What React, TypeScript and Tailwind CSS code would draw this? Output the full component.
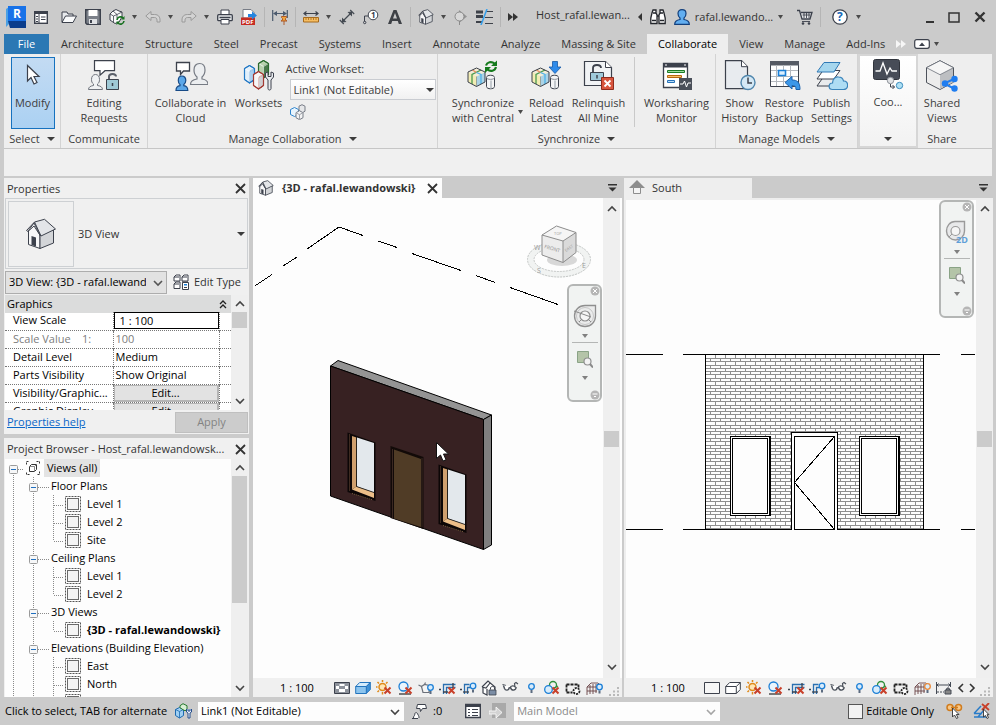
import { useState, type ReactNode } from "react";
import clsx from "clsx";

const INK = "#3c414c";
const BLUE = "#1b7fd6";

function Icon({ size = 16, w, children }: { size?: number; w?: number; children: ReactNode }) {
  return (
    <svg width={w ?? size} height={size} viewBox={`0 0 ${w ?? size} ${size}`} fill="none" className="shrink-0" aria-hidden="true">
      {children}
    </svg>
  );
}

function Caret({ small }: { small?: boolean }) {
  return small ? (
    <Icon size={6} w={5}>
      <path d="M0 1h5L2.500 5z" fill="#4a4a4a" />
    </Icon>
  ) : (
    <Icon size={6} w={8}>
      <path d="M0 1h8L4 5z" fill="#3c3c3c" />
    </Icon>
  );
}

function Chevron({ dir = "down", color = "#444" }: { dir?: "up" | "down"; color?: string }) {
  return (
    <Icon size={8} w={10}>
      <path d={dir === "up" ? "M1 6l4-4 4 4" : "M1 2l4 4 4-4"} stroke={color} strokeWidth="1.6" />
    </Icon>
  );
}

function CloseX() {
  return (
    <Icon size={11}>
      <path d="M1 1l9 9M10 1l-9 9" stroke="#333" strokeWidth="1.8" />
    </Icon>
  );
}

/* ---------- shared icon parts ---------- */

function RedX({ x, y, s = 6 }: { x: number; y: number; s?: number }) {
  return <path d={`M${x} ${y}l${s} ${s}M${x + s} ${y}l${-s} ${s}`} stroke="#c8402a" strokeWidth="2" />;
}

function Bulb({ x, y, color = BLUE }: { x: number; y: number; color?: string }) {
  return (
    <g>
      <circle cx={x} cy={y} r="2.8" fill="#d7ebfb" stroke={color} strokeWidth="1.3" />
      <path d={`M${x - 1} ${y + 3.5}h2v3h-2z`} fill="#5b6b80" />
    </g>
  );
}

function HexBlock({ x, y, color, light, mid }: { x: number; y: number; color: string; light: string; mid: string }) {
  return (
    <g transform={`translate(${x} ${y})`} stroke={color} strokeLinejoin="round">
      <path d="M5.500.5l5 3v11l-5 3.500-5-3.500v-11z" fill={light} />
      <path d="M5.500 6.500l5-3v11l-5 3.500z" fill={mid} />
      <path d="M.5 3.500l5 3 5-3M5.500 6.500V18" strokeWidth=".7" stroke="#fff" />
      <path d="M5.500.5l5 3v11l-5 3.500-5-3.500v-11z" strokeWidth="1.200" />
    </g>
  );
}

function CentralModel() {
  return (
    <g>
      <path d="M9.500 8l8.500 4v10l-8.500 4.500L1 22V12z" fill="#f2ecb4" />
      <path d="M9.500 16.500L18 12v10l-8.500 4.500z" fill="#abd3e6" />
      <path d="M9.500 8l8.500 4-8.500 4.500L1 12z" fill="#f3ecd8" />
      <path d="M14 10l-9 4.500v9.500" stroke="#4a9a4f" strokeWidth="1.300" />
      <path d="M5.500 10l4 2.500" stroke="#e88a5c" strokeWidth="1.300" />
      <path d="M9.500 12.500l4.500 2v9.500" stroke="#4fb2e8" strokeWidth="1.300" />
      <path d="M9.500 16.500v10" stroke="#8f948f" strokeWidth=".8" />
      <path d="M9.500 8l8.500 4v10l-8.500 4.500L1 22V12z" stroke={INK} strokeLinejoin="round" />
      <path d="M19.500 17.500c0-3 8-3 8 0v9c0 3-8 3-8 0z" fill="#f4f5f6" stroke={INK} />
      <path d="M19.500 17.500c0 2.500 8 2.500 8 0" stroke="#8a8f98" />
      <path d="M24 20.500v8" stroke="#b5bac0" strokeWidth="1.500" />
    </g>
  );
}

function House({ size = 16 }: { size?: number }) {
  const line = size > 20 ? 1 : 1.6;
  return (
    <svg width={size} height={size} viewBox="0 0 32 32" fill="none" className="shrink-0" aria-hidden="true">
      <path d="M3.500 12.500v14L15 30.500V17L9 5z" fill="#f7f7f8" stroke={INK} strokeWidth={line} />
      <path d="M15 17v13.500L28.500 25V11z" fill="#d3d5d8" stroke={INK} strokeWidth={line} />
      <path d="M9.500 4l10-2.700L30.500 11 16 18z" fill="#e3e5e8" stroke={INK} strokeWidth={line} strokeLinejoin="round" />
      <path d="M9.500 4L1.500 12.500l1.500 1 6-5.500 6.500 10" stroke={INK} strokeWidth={line} strokeLinejoin="round" fill="none" />
      <path d="M6.500 18l4.500 1.500v9l-4.500-1.500z" fill={INK} />
    </svg>
  );
}

/* ---------- quick access toolbar ---------- */

function RevitLogo() {
  return (
    <Icon size={22} w={20}>
      <path d="M0 3l3-2v17l-3 3z" fill="#4ba0e4" />
      <path d="M2 15h18v7H4z" fill="#0a3d8c" />
      <path d="M2 0h18v15H2z" fill="#1872e8" />
      <text x="7" y="12" fontSize="12" fontWeight="700" fill="#fff">R</text>
    </Icon>
  );
}

const qat: Record<string, ReactNode> = {
  Home: (
    <Icon w={14}>
      <rect x=".7" y="2.700" width="12.600" height="11.600" fill="#fff" stroke={INK} strokeWidth="1.400" />
      <path d="M0 2h14v3H0z" fill={INK} />
      <path d="M5 5v9M2 7.500h2M2 10h2M2 12.500h2M7 8h4.500M7 10.500h4.500" stroke={INK} />
    </Icon>
  ),
  Open: (
    <Icon>
      <path d="M1 13V3h5l1 2h5v2" fill="#e8eaed" stroke={INK} />
      <path d="M1 13.500L4.500 7H15.500L12 13.500z" fill="#fafbfc" stroke={INK} strokeLinejoin="round" />
    </Icon>
  ),
  Save: (
    <Icon>
      <path d="M.7.7h14.600v14.600H2L.7 14z" fill="#7b8089" stroke={INK} strokeWidth="1.400" />
      <path d="M3.500 1h9v6h-9z" fill="#fff" />
      <path d="M4 10h8v5H4z" fill="#dfe1e4" />
      <path d="M5 11h2v3H5z" fill={INK} />
    </Icon>
  ),
  Synchronize: (
    <Icon>
      <path d="M4 2l3-1.500 3 1.500 3 1v5l-3 5-4 1.500L1 11V5z" fill="#fafafa" stroke={INK} />
      <path d="M1 5l3.500 2L8 5.500 13 3M4.500 7v6M4 2l4 3.500v4" stroke={INK} strokeWidth=".8" />
      <path d="M8 11a3.500 3.500 0 0 1 6-2M15 12a3.500 3.500 0 0 1-6 2" stroke="#17701f" strokeWidth="1.600" />
      <path d="M15.500 7v3.500H12zM7.500 16v-3.500H11z" fill="#17701f" />
    </Icon>
  ),
  Undo: (
    <Icon>
      <path d="M6 2.500v3h3.500c4 0 5.500 2.500 5.500 5.500v2h-3v-2c0-1.500-1-2.500-2.500-2.500H6v3L.8 7z" fill="#d3d3d3" stroke="#9a9a9a" strokeLinejoin="round" />
    </Icon>
  ),
  Redo: (
    <Icon>
      <path d="M10 2.500v3H6.500C2.500 5.500 1 8 1 11v2h3v-2c0-1.500 1-2.500 2.500-2.500H10v3L15.200 7z" fill="#d3d3d3" stroke="#9a9a9a" strokeLinejoin="round" />
    </Icon>
  ),
  Print: (
    <Icon>
      <path d="M4 1h8v5H4z" fill="#fff" stroke={INK} />
      <rect x=".7" y="5.700" width="14.600" height="6" rx="1" fill="#e4e6e8" stroke={INK} strokeWidth="1.300" />
      <path d="M2.500 8.500h11" stroke={INK} strokeWidth="1.500" />
      <path d="M4 10.500h8v4.500H4z" fill="#fff" stroke={INK} />
    </Icon>
  ),
  "Export PDF": (
    <Icon>
      <path d="M2 .5h8l3 3V9H2z" fill="#fff" stroke="#777c86" />
      <path d="M0 8.500h14V16H0z" fill="#c62d23" />
      <path d="M7 5h4V2.500l5 4-5 4V8H7z" fill="#2585df" />
      <text x="1" y="15" fontSize="6" fontWeight="700" fill="#fff">PDF</text>
    </Icon>
  ),
  Dimension: (
    <Icon>
      <path d="M.7 1v11M15.300 1v8M2 4.500h12" stroke="#4b5a6e" strokeWidth="1.200" />
      <path d="M1 4.500L5 2v5zM15 4.500L11 2v5z" fill="#4b5a6e" />
      <path d="M9.500 7.500h5v1l-1 1v1.500l1.500 1H9l1.500-1V9.500l-1-1zM12 12v4" fill="#f2a53e" stroke="#a9511d" strokeWidth=".9" />
    </Icon>
  ),
  Measure: (
    <Icon>
      <path d="M2 4.500h12M3.500 2.500l-2.500 2 2.500 2M12.500 2.500l2.500 2-2.500 2" stroke={INK} strokeWidth="1.200" />
      <path d="M.5 8.500h15v4.500H.5z" fill="#f6bd62" stroke="#a66a1d" />
      <path d="M3 9v2M5.500 9v2M8 9v2M10.500 9v2M13 9v2" stroke="#a66a1d" strokeWidth=".8" />
    </Icon>
  ),
  Aligned: (
    <Icon>
      <path d="M3.500 12.500l9-9" stroke="#444a52" strokeWidth="1.300" />
      <path d="M3 8.500l4.500 4.500L3 13.500zM13 7.500L8.500 3l4.500-.5z" fill="#444a52" />
      <path d="M.8 11l4 4M11.200 1l4 4" stroke="#444a52" strokeWidth="1.200" />
    </Icon>
  ),
  Tag: (
    <Icon>
      <circle cx="10" cy="6" r="4.800" fill="#fff" stroke={INK} />
      <text x="8" y="9" fontSize="8" fontWeight="700" fill={INK}>1</text>
      <path d="M5 7H1.500v6" stroke={INK} />
      <circle cx="1.700" cy="13.500" r="1.200" fill="#cbcbcb" stroke={INK} />
    </Icon>
  ),
  Text: (
    <Icon>
      <path d="M1 15L6.500 1h3L15 15h-3.200l-1-3H5.200l-1 3zM6 9.500h4L8 4z" fill="#3e4146" />
    </Icon>
  ),
  "3D View": <House />,
  Section: (
    <Icon w={14}>
      <path d="M5 1l8 6.500L5 14" fill="#949494" />
      <circle cx="5.500" cy="7.500" r="4.500" fill="#d8d8d8" stroke="#8b8b8b" />
      <path d="M5.500 12v4" stroke="#8b8b8b" />
    </Icon>
  ),
  "Thin Lines": (
    <Icon w={17}>
      <path d="M0 3h7M0 7.500h7" stroke="#3e424a" strokeWidth="3" />
      <path d="M0 13h6" stroke="#3e424a" strokeWidth="2" />
      <path d="M10 2.500h7M9 8.500h8M9 14.500h8" stroke="#3e424a" />
      <path d="M11 0L5 16" stroke="#35a0ee" strokeWidth="1.500" />
    </Icon>
  ),
};

function QatButton({ name, menu }: { name: string; menu?: boolean }) {
  return (
    <div className="flex shrink-0 items-center gap-[7px]">
      <button type="button" aria-label={name}>{qat[name]}</button>
      {menu ? (
        <button type="button" aria-label={`${name} options`}>
          <Caret small />
        </button>
      ) : null}
    </div>
  );
}

function Divider() {
  return <span className="-mx-px h-5 w-px shrink-0 bg-[#b5b5b5]" />;
}

function TitleBar() {
  return (
    <header className="flex h-[34px] shrink-0 items-center gap-2 pr-2 pl-[6px]">
      <RevitLogo />
      <div className="mr-[5px]">
        <QatButton name="Home" />
      </div>
      <QatButton name="Open" />
      <QatButton name="Save" />
      <QatButton name="Synchronize" menu />
      <QatButton name="Undo" menu />
      <QatButton name="Redo" menu />
      <QatButton name="Print" />
      <QatButton name="Export PDF" />
      <Divider />
      <QatButton name="Dimension" />
      <Divider />
      <QatButton name="Measure" menu />
      <QatButton name="Aligned" />
      <QatButton name="Tag" />
      <QatButton name="Text" />
      <Divider />
      <QatButton name="3D View" menu />
      <QatButton name="Section" />
      <QatButton name="Thin Lines" />
      <Divider />
      <button type="button" aria-label="More tools">
        <Icon size={8} w={10}>
          <path d="M0 0l5 4-5 4zM5 0l5 4-5 4z" fill="#333" />
        </Icon>
      </button>
      <span className="ml-[10px] shrink-0 pb-1 whitespace-nowrap">Host_rafal.lewan...</span>
      <Icon size={8} w={4}>
        <path d="M4 0v8L0 4z" fill="#333" />
      </Icon>
      <button type="button" aria-label="Search">
        <Icon>
          <path d="M3 1h3v3l1 2v8.500H.8V9L2 4zM13 1h-3v3L9 6v8.500h6.200V9L14 4z" fill="#fff" stroke="#22252b" strokeWidth="1.300" />
          <path d="M2 11.500h4M10 11.500h4M7 7h2M3 4h3M10 4h3" stroke="#22252b" strokeWidth="1.500" />
        </Icon>
      </button>
      <button type="button" className="flex shrink-0 items-center gap-[5px] whitespace-nowrap">
        <Icon>
          <path d="M.7 15.300c0-3 2-4.300 5.300-4.800V9C4.500 8 4 6.500 4 4.500 4 2 5.500.7 8 .7s4 1.300 4 3.800c0 2-.5 3.500-2 4.500v1.500c3.300.5 5.300 1.800 5.300 4.800z" fill="#62aef0" stroke="#123f7c" strokeWidth="1.200" />
        </Icon>
        rafal.lewando...
        <Caret small />
      </button>
      <button type="button" aria-label="App Store" className="ml-[5px]">
        <Icon w={17}>
          <path d="M1 1.500h2.500L6 10h8l2-6.500H5" stroke={INK} fill="#e9eaec" strokeWidth="1.300" />
          <path d="M6.500 6h8M8 4v5M10.500 4v5M13 4v5M6 12.500h8" stroke={INK} strokeWidth=".9" />
          <circle cx="7" cy="14.500" r="1.300" fill={INK} />
          <circle cx="13" cy="14.500" r="1.300" fill={INK} />
        </Icon>
      </button>
      <Divider />
      <button type="button" aria-label="Help" className="ml-1 flex items-center gap-2">
        <Icon>
          <circle cx="8" cy="8" r="7.200" fill="#fff" stroke={INK} strokeWidth="1.300" />
          <text x="5" y="12" fontSize="12" fontWeight="700" fill="#1668b8">?</text>
        </Icon>
        <Caret small />
      </button>
      <div className="ml-auto flex items-center gap-[14px]">
        <button type="button" aria-label="Minimize">
          <Icon size={12} w={8}>
            <path d="M0 10h8v2H0z" fill="#333" />
          </Icon>
        </button>
        <button type="button" aria-label="Maximize">
          <Icon size={11} w={12}>
            <path d="M1 1h10v9H1z" stroke="#333" strokeWidth="1.500" />
          </Icon>
        </button>
        <button type="button" aria-label="Close" className="mr-[2px]">
          <Icon size={12}>
            <path d="M1.500 1.500l9 9M10.500 1.500l-9 9" stroke="#333" strokeWidth="2.400" />
          </Icon>
        </button>
      </div>
    </header>
  );
}

const tabs = [
  "Architecture", "Structure", "Steel", "Precast", "Systems", "Insert", "Annotate",
  "Analyze", "Massing & Site", "Collaborate", "View", "Manage", "Add-Ins",
];

function RibbonTabs() {
  const [active, setActive] = useState("Collaborate");
  return (
    <nav className="flex h-5 shrink-0 items-stretch gap-px pl-1">
      <button type="button" className="mr-px w-[45px] bg-[#2b78b4] text-white">File</button>
      {tabs.map((tab) => (
        <button
          key={tab}
          type="button"
          onClick={() => setActive(tab)}
          className={clsx("whitespace-nowrap", tab === active ? "bg-[#eeeeee] px-[11px] text-black" : "px-[10px] text-[#333]")}
        >
          {tab}
        </button>
      ))}
      <div className="flex items-center gap-2">
        <Icon size={8} w={10}>
          <path d="M0 0l5 4-5 4zM5 0l5 4-5 4z" fill="#f6f6f6" />
        </Icon>
        <button type="button" aria-label="Minimize ribbon" className="flex items-center gap-1">
          <Icon size={10} w={16}>
            <rect x=".7" y=".7" width="14.600" height="8.600" rx="2" fill="#fff" stroke={INK} strokeWidth="1.200" />
            <path d="M5 7l3-3.500L11 7z" fill={INK} />
          </Icon>
          <Caret small />
        </button>
      </div>
    </nav>
  );
}

/* ---------- large ribbon icons ---------- */

const big: Record<string, ReactNode> = {
  modify: (
    <Icon size={32} w={20}>
      <path d="M4.500 5.500v15.500l3.500-3.500 3 6.500 3-1.500-3-6h5z" fill="#fff" stroke={INK} strokeWidth="1.200" />
    </Icon>
  ),
  editing: (
    <Icon size={32}>
      <path d="M6.500.7h20v10H17l-5 4.500v-4.500H6.500z" fill="#fff" stroke={INK} strokeWidth="1.200" />
      <path d="M.5 29.500c0-2.500 2-3.500 5-4V24c-1.500-1-2-2.500-2-4.500 0-3 1.500-5 4-5s4 2 4 5c0 2-.5 3.500-2 4.500v1.500c3 .5 5 1.500 5 4z" fill="#f0f2f4" stroke="#70757e" />
      <path d="M21 20v-3.500c0-3.500 7-3.500 7 0" stroke="#5b606a" strokeWidth="2" />
      <path d="M18.500 19.500h12v10h-12z" fill="#9fc9d6" stroke={INK} />
      <path d="M24.500 23v3" stroke={INK} strokeWidth="1.500" />
    </Icon>
  ),
  cloud: (
    <Icon size={32} w={34}>
      <path d="M2.500 2.500h13v8.500H9.500L6.500 14.500V11h-4z" fill="#fff" stroke={INK} strokeWidth="1.300" />
      <path d="M16.500 24.500c0-3.500 3-5 6.500-5.500v-2c-2-1.500-3-4-3-7 0-4 2-6.500 5.500-6.500S31 6 31 10c0 3-1 5.500-3 7v2c3.500.5 6 2 6 5.500z" fill="#eceef0" stroke="#767b84" strokeWidth="1.200" />
      <path d="M2 30.500c0-3 2-4.500 4-4.800v-1.200c-1.200-1-1.700-2.500-1.700-4C4.300 18 5.300 16 7.800 16s4 2 4 4.500c0 1.500-.7 3-2 4v1.200c2 .3 4 1.800 4 4.800z" fill="#5ba7e8" stroke="#174a86" strokeWidth="1.200" />
    </Icon>
  ),
  worksets: (
    <Icon size={32}>
      <HexBlock x={1} y={5} color="#2479c5" light="#e2f0fb" mid="#a9d0f0" />
      <HexBlock x={15} y={0} color="#2c6b2f" light="#b9d2ae" mid="#4b7a4b" />
      <HexBlock x={10} y={11} color="#a33a33" light="#f6f6f6" mid="#cfcfd2" />
      <path d="M22.500 13v4l2.500 3v8.500c0 2 3 2 3 0V20l2.500-3v-4l-2.500-1v4.500h-3V12z" fill="#e9ebee" stroke={INK} />
    </Icon>
  ),
  sync: (
    <Icon size={32}>
      <CentralModel />
      <path d="M19 5.500C20 2 24.500 1 27.500 3.500M29 7c-1 4-5.500 5-8.500 2.500" stroke="#157a1c" strokeWidth="2.200" />
      <path d="M30 .5V6h-6zM18 13V7h6z" fill="#157a1c" />
    </Icon>
  ),
  reload: (
    <Icon size={32}>
      <CentralModel />
      <path d="M21.500 1.500h5V7h3.500l-6 6.500L18 7h3.500z" fill="#2f8bea" stroke="#1659a6" strokeWidth=".8" />
    </Icon>
  ),
  relinquish: (
    <Icon size={32}>
      <path d="M1.500 1.500h21l6 6v18h-27z" fill="#f1f3f5" stroke={INK} strokeWidth="1.200" />
      <path d="M22.500 1.500v6h6" fill="#fff" stroke={INK} />
      <path d="M10 12V8c0-4 8-4 8 0" stroke={INK} strokeWidth="1.800" />
      <path d="M7.500 12.500h13v8h-13z" fill="#9fcadb" stroke={INK} />
      <path d="M14 15v3.500" stroke={INK} strokeWidth="1.500" />
      <path d="M18.500 17.500h12v12h-12z" fill="#d8553d" stroke="#8f2b1c" />
      <path d="M21.500 20.500l6 6M27.500 20.500l-6 6" stroke="#fff" strokeWidth="1.800" />
    </Icon>
  ),
  monitor: (
    <Icon size={32}>
      <path d="M2.500 3.500h24v24h-24z" fill="#fff" stroke={INK} strokeWidth="1.300" />
      <path d="M2 3h25v4.500H2z" fill={INK} />
      <path d="M23 5h2M4 5h2" stroke="#fff" />
      <path d="M6.500 10.500h17v2h-17z" fill="#9edc9e" stroke="#1b7a26" />
      <path d="M6.500 15.500h14v2h-14z" fill="#f7c068" stroke="#b8660f" />
      <path d="M6.500 20.500h7v2h-7z" fill="#b9dcf6" stroke="#2671b8" />
      <path d="M18 18h13v12H18z" fill="#4a4f59" />
      <path d="M19 24h3l1.500-3 2 6 1.500-4h3" stroke="#fff" />
    </Icon>
  ),
  history: (
    <Icon size={32}>
      <path d="M1.500.7h16l6 6v22h-22z" fill="#e8ebef" stroke={INK} strokeWidth="1.200" />
      <path d="M17.500.7v6h6" fill="#fff" stroke={INK} />
      <circle cx="24" cy="22.500" r="7" fill="#d4e8f5" stroke="#4f86ad" strokeWidth="1.400" />
      <path d="M24 17.500v5.500h4" stroke={INK} strokeWidth="1.500" />
    </Icon>
  ),
  restore: (
    <Icon size={32}>
      <path d="M1.500 2.500h28v24h-28z" fill="#fff" stroke={INK} />
      <path d="M1 1h29v4.500H1z" fill="#555a64" />
      <path d="M7.500 5v21M14.500 5v21M21.500 5v21M2 10.500h27M2 16.500h27M2 21.500h27" stroke="#b4b8be" />
      <path d="M9.500 10.500h7v5h-7z" fill="#dcefff" stroke={BLUE} strokeWidth="1.600" />
      <path d="M16 22.500l7-6V20c5 0 8 2 8 9.500h-4c0-3-1-4-4-4V29z" fill="#3c97e8" stroke="#1b62ae" />
    </Icon>
  ),
  publish: (
    <Icon size={32}>
      <path d="M7 17.500h17l-6 8.500H1z" fill="#e9ebed" stroke={INK} />
      <path d="M7 10.500h17l-6 8.500H1z" fill="#fff" stroke={INK} />
      <path d="M8 2.500h16l-6 9.500H1z" fill="#a5d6ee" stroke="#3079b5" />
      <path d="M16.500 29.500c-4.500 0-4.500-6.500 0-6.500 0-4 3-6.500 6-6 2.500 0 4.500 1.500 5 4 5.500-.5 5.500 8.500 0 8.500z" fill="#aeddf4" stroke="#3a84bb" strokeWidth="1.200" />
    </Icon>
  ),
  coordination: (
    <Icon size={32}>
      <rect x="1.500" y=".5" width="26" height="20" rx="2" fill="#474c57" stroke="#30343c" />
      <path d="M3.500 12h4.500l3-8 4 11 3-6 2 3h5" stroke="#fff" strokeWidth="1.300" />
      <circle cx="18.500" cy="21.500" r="3.200" fill="#e1e3e6" stroke="#8b9097" />
      <circle cx="27.500" cy="26.500" r="3.200" fill="#aee0f4" stroke="#3d8cbd" />
      <path d="M18.500 25v3h4M20.500 26l2 2-2 2" stroke={INK} />
    </Icon>
  ),
  shared: (
    <Icon size={32} w={34}>
      <path d="M15 .7l13.500 7v14.500L15 29.500 1.500 22.500V7.700z" fill="#ececec" stroke="#4d525b" />
      <path d="M15 14.700l13-7v14.500L15 29z" fill="#bdbfc2" />
      <path d="M15 .7l13.500 7L15 14.700 1.500 7.700z" fill="#f6f6f6" stroke="#6a6f78" strokeWidth=".8" />
      <path d="M29 19l-10 4.500L29 28.500" stroke="#1f7df0" strokeWidth="2" />
      <circle cx="29.500" cy="19" r="3.200" fill="#1f7df0" />
      <circle cx="20" cy="23.500" r="3.200" fill="#1f7df0" />
      <circle cx="29.500" cy="28.500" r="3.200" fill="#1f7df0" />
    </Icon>
  ),
};

function RibbonButton({ icon, lines, className }: { icon: string; lines: string[]; className?: string }) {
  return (
    <button type="button" className={clsx("flex shrink-0 flex-col items-center pt-[3px] leading-[15px] whitespace-nowrap", className)}>
      {big[icon]}
      <span className="mt-[3px] flex flex-col">
        {lines.map((line) => (
          <span key={line}>{line}</span>
        ))}
      </span>
    </button>
  );
}

function RibbonGroup({ label, menu, className, children }: { label: string; menu?: boolean; className: string; children: ReactNode }) {
  return (
    <section className={clsx("flex shrink-0 flex-col border-r border-[#d3d3d3]", className)}>
      <div className="flex h-[75px] items-start justify-center pt-[3px]">{children}</div>
      <div className="flex flex-1 items-center justify-center gap-[7px] whitespace-nowrap">
        {label}
        {menu ? <Caret /> : null}
      </div>
    </section>
  );
}

function Ribbon() {
  return (
    <div className="mx-1 shrink-0 bg-[#eeeeee] text-[#3c3c3c]">
      <div className="flex h-[95px] border-b border-[#c6c6c6]">
        <RibbonGroup label="Select" menu className="w-[57px]">
          <button type="button" className="ml-px flex h-[72px] w-11 flex-col items-center border border-[#1672bf] bg-gradient-to-b from-[#c3dbf3] to-[#abd1f2] pt-[2px] leading-[15px]">
            {big.modify}
            <span className="mt-[3px]">Modify</span>
          </button>
        </RibbonGroup>
        <RibbonGroup label="Communicate" className="w-[87px]">
          <RibbonButton icon="editing" lines={["Editing", "Requests"]} />
        </RibbonGroup>
        <RibbonGroup label="Manage Collaboration" menu className="w-[290px]">
          <RibbonButton icon="cloud" lines={["Collaborate in", "Cloud"]} className="w-[82px]" />
          <RibbonButton icon="worksets" lines={["Worksets"]} className="w-[54px]" />
          <div className="flex flex-col pt-1">
            <label htmlFor="active-workset" className="leading-4">Active Workset:</label>
            <div className="relative mt-[2px] ml-1">
              <select id="active-workset" className="h-[21px] w-[146px] appearance-none border border-[#c9ccd1] bg-gradient-to-b from-white to-[#f1f1f1] pl-[3px]">
                <option>Link1 (Not Editable)</option>
              </select>
              <span className="pointer-events-none absolute top-2 right-[2px]"><Caret /></span>
            </div>
            <button type="button" aria-label="Gray inactive worksets" className="mt-1 ml-1 w-4">
              <Icon>
                <path d="M4.500 3.500l4 2v5l-4 2-4-2v-5z" fill="#e8f4fd" stroke="#2f86cf" />
                <path d="M12 .7l3 1.500v5L12 9 9 7V2.200z" fill="#e6e7e9" stroke="#777c86" />
                <path d="M9.500 6.700l3.500 2v5l-3.500 2-3.500-2v-5z" fill="#f3f3f4" stroke="#777c86" />
                <path d="M6 8.700l3.500 2 3.500-2M9.500 10.500v5" stroke="#a0a4ab" />
              </Icon>
            </button>
          </div>
        </RibbonGroup>
        <RibbonGroup label="Synchronize" menu className="w-[278px]">
          <RibbonButton icon="sync" lines={["Synchronize", "with Central"]} className="ml-[10px] w-[69px]" />
          <button type="button" aria-label="Synchronize options" className="mt-[52px] w-[6px]"><Caret small /></button>
          <RibbonButton icon="reload" lines={["Reload", "Latest"]} className="ml-[2px] w-[42px]" />
          <RibbonButton icon="relinquish" lines={["Relinquish", "All Mine"]} className="w-[62px]" />
          <span className="mx-1 h-[70px] w-px bg-[#c9c9c9]" />
          <RibbonButton icon="monitor" lines={["Worksharing", "Monitor"]} className="w-[76px]" />
        </RibbonGroup>
        <RibbonGroup label="Manage Models" menu className="w-[142px]">
          <RibbonButton icon="history" lines={["Show", "History"]} className="w-[44px]" />
          <RibbonButton icon="restore" lines={["Restore", "Backup"]} className="w-[46px]" />
          <RibbonButton icon="publish" lines={["Publish", "Settings"]} className="w-[48px]" />
        </RibbonGroup>
        <section className="flex w-[60px] shrink-0 flex-col items-center border-2 border-[#d6d6d6] bg-gradient-to-b from-white to-[#f2f2f2]">
          <RibbonButton icon="coordination" lines={["Coo..."]} className="pt-1" />
          <span className="mt-auto mb-1"><Caret /></span>
        </section>
        <section className="flex w-[48px] shrink-0 flex-col">
          <div className="flex h-[75px] justify-center pt-[3px]">
            <RibbonButton icon="shared" lines={["Shared", "Views"]} />
          </div>
          <div className="flex flex-1 items-center justify-center">Share</div>
        </section>
      </div>
      <div className="h-[27px] bg-[#f0f0f0]" />
    </div>
  );
}

/* ---------- properties palette ---------- */

const properties = [
  { name: "View Scale", value: "1 : 100", kind: "input" },
  { name: "Scale Value    1:", value: "100", kind: "muted" },
  { name: "Detail Level", value: "Medium", kind: "text" },
  { name: "Parts Visibility", value: "Show Original", kind: "text" },
  { name: "Visibility/Graphic...", value: "Edit...", kind: "button" },
  { name: "Graphic Display ...", value: "Edit...", kind: "button" },
];

function ScrollBar({ thumb, className = "py-[5px]" }: { thumb: string; className?: string }) {
  return (
    <div className={clsx("flex w-[17px] shrink-0 flex-col items-center bg-[#efefef]", className)}>
      <Chevron dir="up" />
      <div className={clsx("w-[15px] bg-[#cbcbcb]", thumb)} />
      <span className="mt-auto"><Chevron /></span>
    </div>
  );
}

function PropertiesPalette() {
  return (
    <section className="flex shrink-0 flex-col bg-[#f0f0f0] px-px">
      <div className="flex h-5 items-center justify-between pt-px pr-[2px] pl-[2px] text-[#333]">
        Properties
        <button type="button" aria-label="Close properties"><CloseX /></button>
      </div>
      <div className="flex h-[71px] items-center border border-[#cdd0d3] p-[2px]">
        <div className="grid h-[66px] w-[66px] place-items-center border border-[#cdd0d3]">
          <House size={32} />
        </div>
        <span className="ml-1 text-[#333]">3D View</span>
        <button type="button" aria-label="Change type" className="ml-auto"><Caret /></button>
      </div>
      <div className="flex h-[26px] items-center">
        <div className="relative">
          <select aria-label="View" className="h-[23px] w-[162px] appearance-none border border-[#adadad] bg-[#e2e2e2] pr-5 pl-[3px] text-black">
            <option>{"3D View: {3D - rafal.lewandowski}"}</option>
          </select>
          <span className="pointer-events-none absolute top-2 right-1"><Chevron color="#555" /></span>
        </div>
        <button type="button" className="ml-[6px] flex items-center gap-[5px] whitespace-nowrap">
          <Icon>
            <path d="M1 3l2-2h4v6H1zM9 3l2-2h4v6M9 3v4h6M1 10l2-2h4v6.500H1zM9 8h6" fill="#fff" stroke={INK} />
            <path d="M1 3h5M9 3h5M1 10h5" stroke={INK} />
            <path d="M9.500 8.500h6v7h-6z" fill="#fff" stroke={INK} />
            <path d="M11 10h3v1.500h-3z" fill={BLUE} />
            <path d="M11 13.500h3" stroke={INK} />
          </Icon>
          Edit Type
        </button>
      </div>
      <div className="flex h-[115px] overflow-hidden">
        <div className="flex-1 overflow-hidden bg-white">
          <div className="flex h-[18px] items-center justify-between bg-[#dbdcdc] pr-1 pl-[2px] text-black">
            Graphics
            <button type="button" aria-label="Collapse group">
              <Icon size={9} w={8}>
                <path d="M1 4l3-3 3 3M1 8l3-3 3 3" stroke="#222" strokeWidth="1.300" />
              </Icon>
            </button>
          </div>
          <table className="-mt-px w-full table-fixed border-collapse text-black">
            <colgroup>
              <col />
              <col className="w-[106px]" />
              <col className="w-3" />
            </colgroup>
            <tbody>
              {properties.map((row) => (
                <tr key={row.name} className="h-[18px] border-b border-dotted border-[#777]">
                  <th
                    scope="row"
                    className={clsx(
                      "overflow-hidden p-0 pb-px pl-2 text-left leading-4 font-normal whitespace-pre",
                      row.kind === "muted" && "text-[#7d7d7d]",
                    )}
                  >
                    {row.name}
                  </th>
                  <td className={clsx("border-x border-dotted border-[#777] p-0 leading-4", row.kind === "muted" && "text-[#7d7d7d]")}>
                    {row.kind === "input" ? (
                      <input aria-label={row.name} defaultValue={row.value} className="block h-[17px] w-full border border-black bg-white pl-[5px] outline-none" />
                    ) : row.kind === "button" ? (
                      <button type="button" className="block h-[17px] w-full border border-r-2 border-b-2 border-[#b5b5b5] bg-[#e2e2e2] leading-[14px]">
                        {row.value}
                      </button>
                    ) : (
                      <span className="block pb-px pl-[2px]">{row.value}</span>
                    )}
                  </td>
                  <td />
                </tr>
              ))}
            </tbody>
          </table>
        </div>
        <ScrollBar thumb="mt-1 h-4" />
      </div>
      <div className="flex h-6 items-center justify-between pl-[2px]">
        <a href="#help" className="text-[#0a66c8] underline">Properties help</a>
        <button type="button" disabled className="h-[21px] w-[73px] border border-[#bfbfbf] bg-[#cccccc] text-[#838383]">Apply</button>
      </div>
    </section>
  );
}

/* ---------- project browser ---------- */

type TreeRow = { label: string; level: 0 | 1 | 2; last?: boolean; bold?: boolean };

const tree: TreeRow[] = [
  { label: "Views (all)", level: 0 },
  { label: "Floor Plans", level: 1 },
  { label: "Level 1", level: 2 },
  { label: "Level 2", level: 2 },
  { label: "Site", level: 2, last: true },
  { label: "Ceiling Plans", level: 1 },
  { label: "Level 1", level: 2 },
  { label: "Level 2", level: 2, last: true },
  { label: "3D Views", level: 1 },
  { label: "{3D - rafal.lewandowski}", level: 2, last: true, bold: true },
  { label: "Elevations (Building Elevation)", level: 1 },
  { label: "East", level: 2 },
  { label: "North", level: 2 },
  { label: "South", level: 2 },
];

function TreeCell({ kind, w = 20 }: { kind: "line" | "box" | "rootbox" | "tee" | "end"; w?: number }) {
  const box = kind === "box" || kind === "rootbox";
  return (
    <Icon size={18} w={w}>
      {kind !== "rootbox" ? (
        <path d={kind === "end" ? "M8.500 0v10" : "M8.500 0v18"} stroke="#8a8a8a" strokeDasharray="1 1" />
      ) : (
        <path d="M8.500 14v4" stroke="#8a8a8a" strokeDasharray="1 1" />
      )}
      {kind !== "line" ? <path d={`M9 10.500h${w - 11}`} stroke="#8a8a8a" strokeDasharray="1 1" /> : null}
      {box ? (
        <>
          <rect x="4.500" y="6.500" width="8" height="8" rx="1" fill="#f6f7f8" stroke="#9a9a9a" />
          <path d="M6 10.500h5" stroke="#1f6fc0" />
        </>
      ) : null}
    </Icon>
  );
}

function TreeItem({ row }: { row: TreeRow }) {
  return (
    <li className="flex h-[18px] items-center whitespace-nowrap text-black">
      {row.level === 0 ? (
        <>
          <TreeCell kind="rootbox" />
          <Icon>
            <path d="M1.500 4.500v-3h3M11.500 1.500h3v3M14.500 11.500v3h-3M4.500 14.500h-3v-3" stroke="#333" strokeDasharray="2 1" />
            <path d="M4.500 6.500l2-2h5v5l-2 2h-5z" fill="#fff" stroke="#333" />
            <path d="M4.500 6.500h5v5M9.500 6.500l2-2" stroke="#888" />
          </Icon>
          <span className="ml-[3px] bg-[#e3e3e3] px-[3px] leading-[18px]">{row.label}</span>
        </>
      ) : null}
      {row.level === 1 ? (
        <>
          <TreeCell kind="line" />
          <TreeCell kind="box" w={26} />
          {row.label}
        </>
      ) : null}
      {row.level === 2 ? (
        <>
          <TreeCell kind="line" />
          <TreeCell kind="line" />
          <TreeCell kind={row.last ? "end" : "tee"} />
          <Icon>
            <rect x=".5" y=".5" width="15" height="15" stroke="#555" strokeDasharray="2 1" />
            <rect x="2.500" y="2.500" width="11" height="11" fill="#f4f4f4" stroke="#6a6a6a" />
          </Icon>
          <span className={clsx("ml-[6px]", row.bold && "font-bold")}>{row.label}</span>
        </>
      ) : null}
    </li>
  );
}

function ProjectBrowser() {
  return (
    <section className="mt-1 flex min-h-0 flex-1 flex-col bg-[#f0f0f0] px-px">
      <div className="flex h-[21px] shrink-0 items-center justify-between pt-px pr-[2px] pl-[2px] text-[#333]">
        <h2 className="whitespace-nowrap">Project Browser - Host_rafal.lewandowsk...</h2>
        <button type="button" aria-label="Close project browser"><CloseX /></button>
      </div>
      <div className="flex min-h-0 flex-1 bg-[#fdfdfd]">
        <ul className="h-full min-w-0 flex-1 overflow-hidden">
          {tree.map((row, i) => (
            <TreeItem key={i} row={row} />
          ))}
        </ul>
        <ScrollBar thumb="mt-1 h-[127px]" />
      </div>
    </section>
  );
}

/* ---------- drawing views ---------- */

function ViewCube() {
  return (
    <svg width="66" height="56" viewBox="526 223 66 56" fill="none" aria-label="View cube" role="img">
      <ellipse cx="559" cy="259.500" rx="28.500" ry="15" stroke="#f1f3f2" strokeWidth="6" />
      <ellipse cx="559" cy="259.500" rx="31.500" ry="17.500" stroke="#c3c6c5" strokeDasharray="2 1" />
      <ellipse cx="559" cy="259.500" rx="25" ry="12" stroke="#c3c6c5" strokeDasharray="2 1" />
      <ellipse cx="562" cy="260" rx="15" ry="6" fill="#d8d8d8" />
      <path d="M542 235l21 6v21.500l-21-7.500z" fill="#ececec" />
      <path d="M563 241l13-8.500v20l-13 10z" fill="#dadada" />
      <path d="M542 235l14.500-9 19.500 6.500-13 8.500z" fill="#f5f5f5" />
      <path d="M542 235l14.500-9 19.500 6.500v20l-13 10-21-7.500zM542 235l21 6 13-8.500M563 241v21.500" stroke="#8c8c8c" strokeLinejoin="round" />
      <text x="544" y="248" fontSize="5" fill="#8d8d8d" transform="rotate(16 544 248)">FRONT</text>
      <text x="566" y="252" fontSize="4" fill="#9d9d9d" transform="rotate(-34 566 252)">EAST</text>
      <text x="554" y="235" fontSize="4" fill="#9d9d9d">TOP</text>
      <g fontSize="7" fill="#9a9a9a">
        <text x="534" y="250">W</text>
        <text x="537" y="273">S</text>
        <text x="582" y="268">E</text>
      </g>
    </svg>
  );
}

function NavigationBar({ flat }: { flat?: boolean }) {
  return (
    <div className="flex h-[118px] w-[35px] flex-col items-center rounded-md border-2 border-[#b4b6b5] bg-[#f1f3f2]">
      <button type="button" aria-label="Close navigation bar" className="self-end">
        <Icon size={10}>
          <circle cx="5" cy="5" r="4.500" fill="#b5b5b5" />
          <path d="M3 3l4 4M7 3L3 7" stroke="#fff" />
        </Icon>
      </button>
      <button type="button" aria-label="Steering wheel" className="mt-2">
        <Icon size={24}>
          {flat ? (
            <>
              <path d="M10 1.500h9.500V11c0 5-4 9-9 9s-9-4-9-9 3.500-9.500 8.500-9.500z" fill="#e8e9ea" stroke="#9a9a9a" strokeWidth="1.400" />
              <circle cx="10.500" cy="11" r="4.500" fill="#f6f6f6" stroke="#9a9a9a" strokeWidth="1.200" />
              <path d="M4 17l3-3" stroke="#9a9a9a" />
              <text x="11" y="23" fontSize="9" fontWeight="700" fill="#5f9fd8">2D</text>
            </>
          ) : (
            <>
              <path d="M12 1.500h10.500V12c0 6-4.500 10.500-10.500 10.500S1.500 18 1.500 12 6 1.500 12 1.500z" fill="#ebecec" stroke="#8f8f8f" strokeWidth="1.300" />
              <circle cx="12" cy="12" r="8.500" stroke="#c6c6c6" />
              <circle cx="12" cy="12" r="5" fill="#f6f6f6" stroke="#8f8f8f" strokeWidth="1.200" />
              <path d="M6 18l3-3M18 18l-3-3M1 7l17 6" stroke="#8a8a8a" />
            </>
          )}
        </Icon>
      </button>
      <span className="mt-[6px]"><NavCaret /></span>
      <span className="mt-1 h-px w-[26px] shrink-0 bg-[#b4b6b5]" />
      <button type="button" aria-label="Zoom region" className="mt-2">
        <Icon size={17} w={16}>
          <path d="M.5.5h11v11H.5z" fill="#b4c4a8" stroke="#8aa386" />
          <circle cx="10.500" cy="10.500" r="3.500" fill="#f3f3f3" stroke="#909090" strokeWidth="1.200" />
          <path d="M13 13l3 3.500" stroke="#8a8a8a" strokeWidth="2" />
        </Icon>
      </button>
      <span className="mt-2"><NavCaret /></span>
      <button type="button" aria-label="Navigation bar options" className="mt-auto self-end">
        <Icon size={10}>
          <circle cx="5" cy="5" r="4.500" fill="#b5b5b5" />
          <path d="M2.500 4h5M4 6.500h2" stroke="#fff" />
        </Icon>
      </button>
    </div>
  );
}

function NavCaret() {
  return (
    <svg width="6" height="4" viewBox="0 0 6 4" className="block" aria-hidden="true">
      <path d="M0 0h6L3 4z" fill="#808080" />
    </svg>
  );
}

function Window3D() {
  return (
    <g>
      <path d="M347.500 432.500l28 10v58.500l-28-9z" fill="#0c0606" />
      <path d="M352 436l4.500 1.500v49l-4.500 3z" fill="#cf9f6d" />
      <path d="M352 489.500l4.500-3 17.500 6v5.500z" fill="#ecbe88" />
      <path d="M357 437.500l17 5.500v49.500l-17-6z" fill="#e3e8ec" />
      <path d="M356.500 437v49.500l17.500 6" stroke="#111" strokeWidth=".8" fill="none" />
      <path d="M349.500 434v57" stroke="#4a3528" strokeWidth=".8" />
      <path d="M352 493.500l21 6.500" stroke="#7a6040" strokeDasharray="1 1" />
    </g>
  );
}

function Canvas3D() {
  return (
    <svg className="absolute inset-0 h-full w-full" role="img" aria-label="3D view of the wall">
      <g transform="translate(-253 -198)" strokeLinejoin="round">
        <path
          d="M255.500 285.500l16.500-11M283 266l14-9M307 249l32-22 24 8.500M378 241l19 6.500M412 253.500l49 17M476 275.500l19 7M510 287.500l48 17"
          stroke="#000"
          fill="none"
          shapeRendering="crispEdges"
        />
        <path d="M330.500 366l7.500-5.500 153.500 54.500-8 4.500z" fill="#949494" stroke="#000" />
        <path d="M483.500 419.500l8-4.500V545l-8 4.500z" fill="#7f7f7f" stroke="#000" />
        <path d="M330.500 366l153 53.500v130L330.500 496z" fill="#372122" stroke="#000" />
        <Window3D />
        <g transform="translate(91 32)">
          <Window3D />
        </g>
        <path d="M390.500 446l33 11v72l-33-11z" fill="#120a08" />
        <path d="M392.500 449v69M422 458v69" stroke="#46302a" strokeWidth=".8" />
        <path d="M394 449.500l27 9.500v68l-27-8.500z" fill="#503c26" />
        <path d="M436.500 442.500v16l4-3.500 2.500 6 3-1.200-2.500-5.800h5z" fill="#fff" stroke="#111" />
      </g>
    </svg>
  );
}

function ElevationWindow({ x }: { x: number }) {
  return (
    <g stroke="#000" fill="#fdfdfd">
      <rect x={x + 0.5} y="436.500" width="40" height="79" />
      <path d={`M${x + 40} 437v79`} strokeWidth="2" />
      <rect x={x + 2.5} y="438.500" width="35" height="75" />
    </g>
  );
}

function CanvasSouth() {
  return (
    <svg className="absolute inset-0 h-full w-full" role="img" aria-label="South elevation" shapeRendering="crispEdges">
      <defs>
        <pattern id="brick" x="706" y="355" width="10" height="20" patternUnits="userSpaceOnUse">
          <path
            d="M0 3.500h10M0 6.500h10M0 10.500h10M0 13.500h10M0 16.500h10M0 19.500h10M9.500 0v3M4.500 4v3M9.500 7v3M4.500 11v3M9.500 14v3M4.500 17v3"
            stroke="#8e8e8e"
            fill="none"
          />
        </pattern>
      </defs>
      <g transform="translate(-626 -200)">
        <path d="M705.500 354.500h218v175h-218z" fill="url(#brick)" stroke="#000" />
        <path d="M626 354.500h37M683 354.500h257M961 354.500h14M626 529.500h37M683 529.500h257M961 529.500h14" stroke="#000" />
        <ElevationWindow x={730} />
        <ElevationWindow x={859} />
        <path d="M791.500 529.500v-97h46v97" fill="#fdfdfd" stroke="#000" />
        <path d="M794.500 529.500v-93h40v93z" fill="#fdfdfd" stroke="#000" />
        <path d="M834.500 436.500l-40 46 40 47" fill="none" stroke="#000" />
      </g>
    </svg>
  );
}

/* ---------- view control bar ---------- */

const controls: Record<string, ReactNode> = {
  "Detail level": (
    <Icon>
      <path d="M.5 2.500h15v11H.5z" fill="#8d929b" stroke={INK} />
      <path d="M2 6h3v3H2zM11 6h3v3h-3zM5 9h6v3H5zM5.500 4h5v2h-5z" fill="#fff" />
    </Icon>
  ),
  "Coarse detail": (
    <Icon>
      <path d="M.5 2.500h15v11H.5z" fill="#f6f6f6" stroke={INK} />
    </Icon>
  ),
  "Shaded style": (
    <Icon>
      <path d="M.7 6.500l4-4h10.600l-4 4z" fill="#d5ecfc" stroke="#2374bd" />
      <path d="M11.300 6.500l4-4v7l-4 4z" fill="#3f91d6" stroke="#2374bd" />
      <path d="M.7 6.500h10.600v7H.7z" fill="#8cc4ee" stroke="#2374bd" />
    </Icon>
  ),
  "Hidden line style": (
    <Icon>
      <path d="M.7 6.500l4-4h10.600v7l-4 4H.7z" fill="#fff" stroke={INK} />
      <path d="M.7 6.500h10.600v7M11.300 6.500l4-4" stroke={INK} />
    </Icon>
  ),
  "Sun path": (
    <Icon>
      <circle cx="6.500" cy="7" r="3.500" fill="#ffe6b5" stroke="#e08a1a" strokeWidth="1.500" />
      <path d="M6.500 0v2M6.500 12v2.500M0 7h1.500M1.500 2l1.500 1.500M11.500 2L10 3.500M1.500 12l1.500-1.500" stroke="#e08a1a" strokeWidth="1.500" />
      <RedX x={8.500} y={7.500} />
    </Icon>
  ),
  Shadows: (
    <Icon>
      <path d="M2 14h12" stroke="#777" strokeWidth="2" />
      <circle cx="6.500" cy="6.500" r="4.500" fill="#eaf5fd" stroke={BLUE} strokeWidth="1.300" />
      <RedX x={8.500} y={7.500} />
    </Icon>
  ),
  Rendering: (
    <Icon w={17}>
      <path d="M.5 5l3 1.500L5 12.500h6l.5-7-5-1-3 2M6.500 4.500L7.500 2.500" stroke="#6b707a" strokeWidth="1.200" fill="#f4f4f4" />
      <Bulb x={12.500} y={7.500} />
    </Icon>
  ),
  "Crop view": (
    <Icon w={17}>
      <path d="M0 9.500h2" stroke={INK} strokeWidth="1.500" />
      <path d="M4.500 14V4.500h12M7.500 14V7.500h9" stroke="#2a6fb0" strokeWidth="1.300" />
      <path d="M4 12h5M14 3v5" stroke={INK} strokeWidth="1.300" />
      <RedX x={9.500} y={7.500} />
    </Icon>
  ),
  "Crop region": (
    <Icon w={17}>
      <path d="M0 9.500h2" stroke={INK} strokeWidth="1.500" />
      <path d="M4.500 14V4.500h5M7.500 14V7.500h2.500" stroke="#2a6fb0" strokeWidth="1.300" />
      <path d="M3 12h6" stroke={INK} strokeWidth="1.300" />
      <Bulb x={13} y={6} />
    </Icon>
  ),
  "Locked 3D view": (
    <Icon>
      <path d="M1 7l6-6 7 6v3M2 7v6l4 2v-6M1 7l4 1 4-5" fill="#fff" stroke={INK} strokeWidth="1.200" />
      <path d="M9.500 9.500V8c0-2 4-2 4 0v1.500" stroke={INK} />
      <path d="M8 10h7v5H8z" fill="#7b8da5" stroke={INK} strokeWidth=".8" />
    </Icon>
  ),
  "Temporary hide": (
    <Icon w={17}>
      <path d="M.5 4.500l3.500 1M16 4l-2-1.500-1.500 1 .5 4" stroke="#4a505a" strokeWidth="1.200" />
      <path d="M1.500 5.500l1 3c1 2.500 4.500 2 4.500-.5l1.500-.5c1 4 6 3 5.500-.5" fill="#fff" stroke="#4a505a" strokeWidth="1.400" />
      <path d="M8.500 7.500c0-2 4-2.500 5 0" stroke="#4a505a" strokeWidth="1.200" />
    </Icon>
  ),
  "Reveal hidden": (
    <Icon w={17}>
      <Bulb x={8.500} y={6.500} />
    </Icon>
  ),
  "Temporary properties": (
    <Icon>
      <circle cx="9" cy="5" r="3.500" stroke="#2f8f3c" strokeWidth="1.300" />
      <circle cx="4.500" cy="9.500" r="3.800" fill="#d8ecfb" stroke={BLUE} strokeWidth="1.300" />
      <path d="M10 8l4-2" stroke="#2f8f3c" strokeWidth="1.300" />
      <RedX x={8.500} y={7.500} />
    </Icon>
  ),
  "Analytical model": (
    <Icon>
      <path d="M1.500 4.500h12M1.500 4.500v8h6M13.500 4.500v3" stroke="#222" strokeWidth="1.800" strokeDasharray="3 1" />
      <circle cx="11.500" cy="11" r="3" fill="#fff" stroke="#222" strokeWidth="1.800" strokeDasharray="2 1" />
    </Icon>
  ),
  "Displacement sets": (
    <Icon w={17}>
      <path d="M1 7l4-4h7l3 3M1 7v8M4 5v9M7 4v10M10 4v9M1 7h12M1 11h10" stroke="#6a4346" strokeWidth=".9" />
      <Bulb x={13.500} y={7} />
    </Icon>
  ),
  "Worksharing display": (
    <Icon w={17}>
      <path d="M1 7l4-4h7l3 3M1 7v8M4 5v9M7 4v10M10 4v9M1 7h12M1 11h10" stroke="#6a4346" strokeWidth=".9" />
      <Bulb x={13.500} y={6.500} color="#ea8a3a" />
    </Icon>
  ),
  Constraints: (
    <Icon w={17}>
      <path d="M1.500 2v12M15.500 2v5M2 5h13M3.500 3.500L2 5l1.500 1.500M13.500 3.500L15 5l-1.500 1.500" stroke="#444a55" />
      <path d="M2 12h7" stroke="#444a55" strokeDasharray="2 1" />
      <path d="M11.500 10V9c0-1.500 3-1.500 3 0v1M10 10h6v4h-6z" fill="#888" stroke="#444a55" />
    </Icon>
  ),
};

const controls3D = [
  "Detail level", "Shaded style", "Sun path", "Shadows", "Rendering", "Crop view", "Crop region",
  "Locked 3D view", "Temporary hide", "Reveal hidden", "Temporary properties", "Analytical model", "Displacement sets",
];
const controlsSouth = [
  "Coarse detail", "Hidden line style", "Sun path", "Shadows", "Crop view", "Crop region",
  "Temporary hide", "Reveal hidden", "Temporary properties", "Analytical model", "Worksharing display", "Constraints",
];

function ViewControlBar({ items, pager }: { items: string[]; pager?: boolean }) {
  return (
    <div className="flex h-[19px] shrink-0 items-center gap-1 bg-[#f0f0f0] pl-[27px] text-black">
      <button type="button" className="w-[50px] text-left whitespace-nowrap">1 : 100</button>
      {items.map((item) => (
        <button key={item} type="button" aria-label={item} className="w-[17px] shrink-0">
          {controls[item]}
        </button>
      ))}
      {pager ? (
        <Icon size={10} w={20}>
          <path d="M7 1L3 5l4 4M14 1l4 4-4 4" stroke="#333" strokeWidth="1.600" />
        </Icon>
      ) : null}
      <span className="mr-[2px] ml-auto self-end">
        <Icon size={11}>
          <path d="M8 1h2v2H8zM4 4.500h2v2H4zM8 4.500h2v2H8zM0 8h2v2H0zM4 8h2v2H4zM8 8h2v2H8z" fill="#b9b9b9" />
        </Icon>
      </span>
    </div>
  );
}

function TabListButton() {
  return (
    <button type="button" aria-label="Open views" className="mr-[5px] ml-auto">
      <Icon size={8} w={9}>
        <path d="M0 0h9v1.500H0zM.5 3.500h8l-4 4z" fill="#333" />
      </Icon>
    </button>
  );
}

function Views() {
  return (
    <main className="flex min-w-0 flex-1 gap-[2px]">
      <section className="flex min-w-0 flex-1 flex-col bg-[#fdfdfd]">
        <div className="flex h-5 shrink-0 items-center bg-[#cbcbcb]">
          <div className="flex h-full w-[189px] items-center bg-[#fdfdfd] pl-[5px] font-bold text-[#333]">
            <House />
            <span className="ml-2 flex-1 whitespace-nowrap">{"{3D - rafal.lewandowski}"}</span>
            <button type="button" aria-label="Close view" className="mr-1"><CloseX /></button>
          </div>
          <TabListButton />
        </div>
        <div className="flex min-h-0 flex-1 pr-[2px]">
          <div className="relative flex-1">
            <Canvas3D />
            <div className="absolute top-[25px] right-[11px]"><ViewCube /></div>
            <div className="absolute top-[86px] right-px"><NavigationBar /></div>
          </div>
          <ScrollBar className="py-[7px]" thumb="mt-[218px] h-4" />
        </div>
        <ViewControlBar items={controls3D} />
      </section>
      <section className="flex min-w-0 flex-1 flex-col bg-[#fdfdfd]">
        <div className="flex h-5 shrink-0 items-center bg-[#cbcbcb]">
          <div className="flex h-full w-32 items-center bg-[#eeeeee] pl-[5px] text-[#333]">
            <Icon>
              <path d="M8 0l8 8H0z" fill="#8d8d8d" />
              <path d="M4.500 7.500h7v6h-7z" fill="#f4f4f4" stroke="#8d8d8d" />
            </Icon>
            <span className="ml-[7px]">South</span>
          </div>
          <TabListButton />
        </div>
        <div className="flex min-h-0 flex-1 border-t-2 border-l-2 border-[#eeeeee]">
          <div className="relative flex-1">
            <CanvasSouth />
            <div className="absolute top-0 right-[2px]"><NavigationBar flat /></div>
          </div>
          <ScrollBar className="pt-[5px] pb-[7px]" thumb="mt-[218px] h-4" />
        </div>
        <ViewControlBar items={controlsSouth} pager />
      </section>
    </main>
  );
}

/* ---------- status bar ---------- */

function StatusSelect({ label, value, disabled }: { label: string; value: string; disabled?: boolean }) {
  return (
    <div className="relative w-[206px] shrink-0">
      <select
        aria-label={label}
        disabled={disabled}
        className={clsx("h-[19px] w-full appearance-none bg-[#fdfdfd] pl-[3px] opacity-100", disabled ? "text-[#8a8a8a]" : "text-black")}
      >
        <option>{value}</option>
      </select>
      <span className="pointer-events-none absolute top-[6px] right-1">
        <Chevron color={disabled ? "#a5a5a5" : "#444"} />
      </span>
    </div>
  );
}

function StatusBar() {
  return (
    <footer className="flex h-7 shrink-0 items-center pr-[6px] pl-[5px] text-black">
      <span className="w-[164px] shrink-0 whitespace-nowrap">Click to select, TAB for alternate</span>
      <button type="button" aria-label="Worksets" className="mx-[6px]">
        <Icon w={17}>
          <path d="M4.500 4.500l4 2v6l-4 2.500-4-2.500v-6z" fill="#9fcff2" stroke="#1c69b0" />
          <path d="M.5 6.500l4 2 4-2M4.500 8.500V15" stroke="#1c69b0" strokeWidth=".8" />
          <path d="M8 .7l4 2v4l-2 1-2-1-3-2v-2z" fill="#d9efd5" stroke="#23782b" />
          <path d="M11.500 6v3l1.500 1v5h2v-5l1.500-1V6M13 6v2h2V6" fill="#eaf0fa" stroke="#254e8c" />
        </Icon>
      </button>
      <StatusSelect label="Workset" value="Link1 (Not Editable)" />
      <button type="button" className="ml-2 flex items-center gap-[5px]">
        <Icon>
          <path d="M5.500 1.500l8 0 1 4h-4l-2 3-.500-3H4.500z" fill="#fff" stroke={INK} />
          <path d="M0 15.500h6M1.500 15c0-2 1-2.500 1.500-3-1.500-2 2.500-4 3 0 .5.500 1 1 1 3" fill="#fff" stroke={INK} />
        </Icon>
        :0
      </button>
      <button type="button" aria-label="Design options" className="ml-[23px]">
        <Icon>
          <path d="M.7 1.500h14.600v13H.7z" fill="#fff" stroke={INK} strokeWidth="1.400" />
          <path d="M.7 3h14.600" stroke={INK} strokeWidth="2" />
          <path d="M3 6.500h2M3 9.500h2M3 12.500h2M7 6.500h6M7 9.500h6M7 12.500h6" stroke={INK} />
        </Icon>
      </button>
      <button type="button" aria-label="Add to set" className="mr-2 ml-2">
        <Icon w={17}>
          <path d="M3 0h14v15H3z" fill="#a9a9a9" />
          <path d="M0 8h7V4l6 5.500L7 15v-4H0z" fill="#d3d3d3" stroke="#fff" strokeWidth=".8" />
        </Icon>
      </button>
      <StatusSelect label="Design option" value="Main Model" disabled />
      <label className="ml-auto flex items-center gap-[3px] whitespace-nowrap">
        <input type="checkbox" className="h-[15px] w-[15px] appearance-none border border-[#555] bg-[#f2f2f2]" />
        Editable Only
      </label>
      <button type="button" aria-label="Select links" className="ml-3">
        <Icon w={17}>
          <circle cx="4" cy="4.500" r="3" fill="#f9c887" stroke="#d07c1e" strokeWidth="1.500" />
          <circle cx="12.500" cy="4.500" r="3" fill="#f9c887" stroke="#d07c1e" strokeWidth="1.500" />
          <path d="M5 4.500h7" stroke="#d07c1e" strokeWidth="1.500" />
          <path d="M6.500 5v9l2-2 2 3.500 1.500-.8-1.700-3.200H13z" fill="#fff" stroke="#333" strokeWidth=".9" />
        </Icon>
      </button>
      <button type="button" aria-label="Select underlay elements" className="ml-[10px]">
        <Icon w={17}>
          <path d="M1 10.500L8 3M1 10.500h8M1 14h12M5 14l6-7" stroke="#2a7cc8" strokeWidth="1.500" />
          <path d="M9 1l7 6M16 0L9 7" stroke="#c8402a" strokeWidth="1.800" />
          <path d="M10.500 6v8l2-1.500 1.500 3 1.500-.8-1.500-3H16z" fill="#fff" stroke="#333" strokeWidth=".9" />
        </Icon>
      </button>
    </footer>
  );
}

export default function App() {
  return (
    <div className="flex h-screen flex-col overflow-hidden bg-[#cbcbcb] font-['Open_Sans','Noto_Sans',sans-serif] text-[11px] leading-4 text-[#333]">
      <TitleBar />
      <RibbonTabs />
      <Ribbon />
      <div className="mt-[2px] flex min-h-0 flex-1 gap-[3px] pr-[3px] pl-1">
        <aside className="flex w-[246px] shrink-0 flex-col pr-px">
          <PropertiesPalette />
          <ProjectBrowser />
        </aside>
        <Views />
      </div>
      <StatusBar />
    </div>
  );
}
